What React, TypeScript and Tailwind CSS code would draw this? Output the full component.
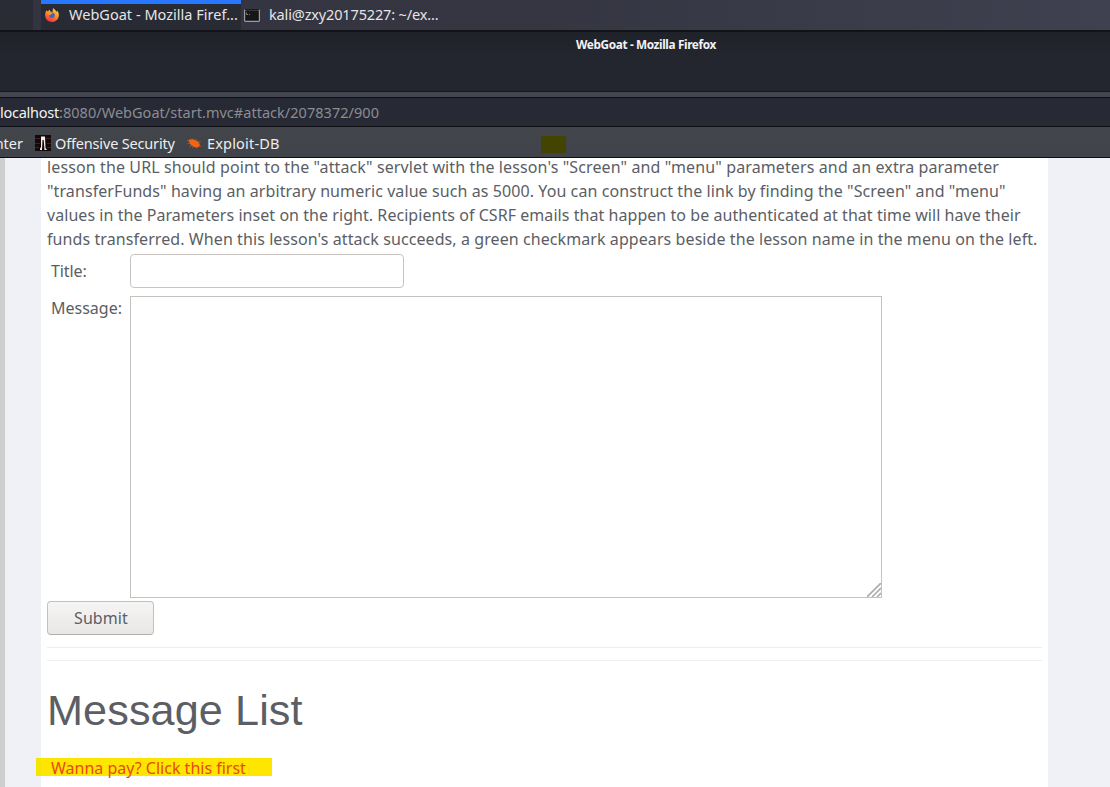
const instructions = [
  {
    text: 'lesson the URL should point to the "attack" servlet with the lesson\'s "Screen" and "menu" parameters and an extra parameter',
    style: "leading-[18px] pb-[3px] tracking-[0.118px]",
  },
  {
    text: '"transferFunds" having an arbitrary numeric value such as 5000. You can construct the link by finding the "Screen" and "menu"',
    style: "tracking-[0.085px]",
  },
  {
    text: "values in the Parameters inset on the right. Recipients of CSRF emails that happen to be authenticated at that time will have their",
    style: "tracking-[0.052px]",
  },
  {
    text: "funds transferred. When this lesson's attack succeeds, a green checkmark appears beside the lesson name in the menu on the left.",
    style: "tracking-[0.083px]",
  },
];

function FirefoxIcon() {
  return (
    <svg aria-hidden="true" className="w-4 h-4 shrink-0" viewBox="0 0 16 16">
      <defs>
        <linearGradient id="flame" x1="0.8" y1="0" x2="0.3" y2="1">
          <stop offset="0" stopColor="#ffdc3e" />
          <stop offset="0.5" stopColor="#ff8a22" />
          <stop offset="1" stopColor="#ed2c50" />
        </linearGradient>
      </defs>
      <path
        d="M2.4 3.2 3.2 4.2 4.6 3.8 6 2.4 6 4.2 8.5 5 9 1 11.5 3.2 12.6 5 13 3.5C14.6 5.3 15.1 7 14.8 9c-.5 3.6-3.3 6-6.8 6C4.2 15 1.2 12.2 1.1 8.5 1 6.5 1.5 4.6 2.4 3.2Z"
        fill="url(#flame)"
      />
      <circle cx="7.9" cy="8.3" r="2.8" fill="#3d65cf" />
      <path d="M3.5 6.2 6.2 5.4 8.6 6.3 6.9 7.6 5.6 8.3Z" fill="#ff9a24" />
    </svg>
  );
}

function TerminalIcon() {
  return (
    <svg aria-hidden="true" className="w-4 h-[13px] shrink-0" viewBox="0 0 16 13">
      <rect x="0.6" y="0.6" width="14.8" height="11.8" rx="1" fill="#141617" stroke="#9a9c9d" strokeWidth="1.2" />
      <path d="M1 .5H15" stroke="#1a1b1d" />
      <path d="M2.5 3.5V5.5H4M5 5.5H6" fill="none" stroke="#a5a7a7" strokeWidth="0.7" />
    </svg>
  );
}

function OffsecIcon() {
  return (
    <svg aria-hidden="true" className="w-4 h-4 shrink-0" viewBox="0 0 16 16">
      <rect width="16" height="16" fill="#160709" />
      <path d="M0 3.5H5M11 3.5H16M0 8.5H5M12 8.5H16M0 12.5H4M12 12.5H16" stroke="#42201f" />
      <path d="M6 1.5H10L10.5 13 12 15H9.5L8.7 5H7.5L7 15H5V13.5L6 12Z" fill="#f0eeee" />
    </svg>
  );
}

function ExploitIcon() {
  return (
    <svg aria-hidden="true" className="w-4 h-4 shrink-0" viewBox="0 0 16 16">
      <path d="M3 4.5 6.5 4.3C10 4.7 13 7 13.7 9.5 14 12 12 13 9.2 12.2 5.5 11 2.7 8.5 3 4.5Z" fill="#f26411" />
      <path
        d="M3.5 5.5H1M4 8 1.5 8.5M6 10 3.5 11.5M8 11 6 12.8M7 5 6 3.5M9.5 5.5 10.5 4M12 7.3 14.5 6.5M10.5 11.5 10.8 13.2M13.5 10.5 15 11.5"
        fill="none"
        stroke="#e35c17"
        strokeWidth="0.7"
      />
    </svg>
  );
}

function Taskbar() {
  return (
    <div className="flex h-[30px] bg-linear-to-r from-[#33343f] via-[#353642] to-[#3f4150] text-[14.5px] leading-[28px] text-[#e4e5e8] font-['Noto_Sans',sans-serif]">
      <div className="w-[33px] bg-[#292b35]" />
      <div className="ml-2 flex w-[200px] border-t-4 border-[#2777ff] bg-[#282a34] pl-[3px]">
        <div className="-mt-1 flex items-center">
          <FirefoxIcon />
          <span className="ml-[9px] pb-[2px] whitespace-nowrap tracking-[0.02px]">WebGoat - Mozilla Firef...</span>
        </div>
      </div>
      <div className="flex items-center pl-[3px]">
        <TerminalIcon />
        <span className="ml-[9px] pb-[2px] whitespace-nowrap tracking-[-0.15px]">kali@zxy20175227: ~/ex...</span>
      </div>
    </div>
  );
}

function BrowserChrome() {
  return (
    <div className="font-['Noto_Sans',sans-serif]">
      <div className="h-[62px] border-t-2 border-b border-t-[#121318] border-b-[#15171d] bg-linear-to-b from-[#20222a] to-[#23262e] to-40%">
        <div className="pl-[576px] pt-[3px] text-[11.8px] leading-[18px] font-bold whitespace-nowrap tracking-[-0.37px] text-[#f2f2f3]">
          WebGoat - Mozilla Firefox
        </div>
      </div>
      <div className="h-[5px] bg-[#434650]" />
      <div className="h-[30px] border-y border-[#0e0f14] bg-[#272935] text-[14.5px] leading-[29px] whitespace-nowrap text-[#8b8d93]">
        <span className="tracking-[-0.25px] text-[#f4f4f5]">localhost</span>
        <span className="tracking-[0.03px]">:8080/WebGoat/start.mvc#attack/2078372/900</span>
      </div>
      <div className="flex h-[31px] items-center border-b border-[#0e0f14] bg-linear-to-b from-[#42454a] to-[#404349] pt-[2px] text-[14.5px] leading-[28px] whitespace-nowrap text-[#eeeef0]">
        <div className="flex w-[35px] justify-end pr-[12px]">nter</div>
        <OffsecIcon />
        <span className="ml-1 w-[131px] tracking-[-0.17px]">Offensive Security</span>
        <ExploitIcon />
        <span className="ml-[5px] w-[334px] tracking-[0.18px]">Exploit-DB</span>
        <div className="mt-[2px] h-[17px] w-[25px] bg-[#434400]" />
      </div>
    </div>
  );
}

function MessageForm() {
  return (
    <form className="flex flex-col">
      <div className="mt-[3px] flex">
        <label htmlFor="title" className="w-[83px] pl-1 leading-[34px] tracking-[-0.1px]">
          Title:
        </label>
        <input id="title" className="h-[34px] w-[274px] rounded-[4px] border border-[#c9c4c0] bg-white px-2 outline-none" />
      </div>
      <div className="mt-2 flex">
        <label htmlFor="message" className="w-[83px] pl-1 whitespace-nowrap">
          Message:
        </label>
        <div className="relative h-[302px] w-[752px]">
          <textarea id="message" className="block h-full w-full resize-none border border-[#c4c3bd] bg-white p-1 outline-none" />
          <svg aria-hidden="true" className="absolute right-px bottom-px w-[14px] h-[14px]" viewBox="0 0 14 14">
            <path d="M0 14 14 0M5 14 14 5M10 14 14 10" stroke="#aaaab0" strokeWidth="1.6" />
          </svg>
        </div>
      </div>
      <button
        type="button"
        className="mt-[3px] h-[34px] w-[107px] rounded-[4px] border border-[#c4c1bb] border-b-[#b3afa9] bg-linear-to-b from-[#f6f5f4] to-[#e9e7e5] pl-px tracking-[0.1px]"
      >
        Submit
      </button>
    </form>
  );
}

export default function App() {
  return (
    <div className="flex h-[787px] w-[1110px] flex-col overflow-hidden bg-[#f0f1f7]">
      <Taskbar />
      <BrowserChrome />
      <div className="flex flex-1 overflow-hidden border-l-[5px] border-[#cecece] pl-9">
        <main className="w-[1007px] bg-white pr-[6px] pl-[6px] text-[16px] leading-6 text-[#5b5e64] font-['Noto_Sans',sans-serif]">
          {instructions.map((line) => (
            <p key={line.text} className={`whitespace-nowrap ${line.style}`}>
              {line.text}
            </p>
          ))}
          <MessageForm />
          <hr className="mt-3 border-[#eeeeee]" />
          <hr className="mt-3 border-[#eeeeee]" />
          <h1 className="mt-[22px] text-[43.2px] leading-[54px] tracking-[0.1px] whitespace-nowrap font-['Liberation_Sans',sans-serif]">
            Message List
          </h1>
          <div className="mt-[21px] -ml-[11px] h-[18px] w-[236px] bg-linear-to-r from-[#f3e600] from-[5px] to-[#ffe600] to-[5px] pl-[15px] leading-[21px] whitespace-nowrap text-[#e84a10]">
            <a>Wanna pay? Click this first</a>
          </div>
        </main>
      </div>
    </div>
  );
}
